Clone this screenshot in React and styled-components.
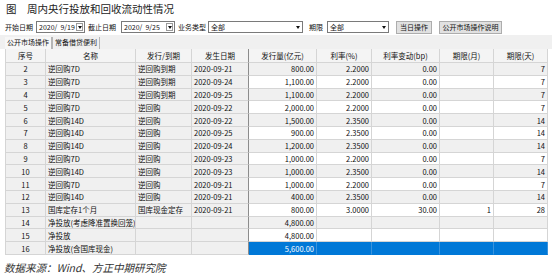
import React from "react";
import styled, { createGlobalStyle } from "styled-components";

const GlobalStyle = createGlobalStyle`
  body {
    margin: 0;
    background: #fff;
    font-family: "Noto Sans CJK SC", "Noto Sans", sans-serif;
  }
`;

const Page = styled.div`
  width: 552px;
  height: 276px;
  overflow: hidden;
  background: #fff;
`;

const Title = styled.h1`
  margin: 0;
  padding: 3px 0 0 6px;
  height: 17px;
  box-sizing: border-box;
  font-size: 10.5px;
  line-height: 12px;
  font-weight: normal;
  color: #222;
  white-space: pre;
`;

const Toolbar = styled.div`
  display: flex;
  align-items: center;
  height: 14px;
  margin-top: 3px;
  padding-left: 5px;
  font-size: 7px;
  color: #111;
`;

const Label = styled.span`
  margin-left: ${(p) => p.$ml || 0}px;
  white-space: nowrap;
`;

const Field = styled.div`
  position: relative;
  display: flex;
  align-items: center;
  box-sizing: border-box;
  width: ${(p) => p.$w}px;
  height: 12px;
  margin-left: ${(p) => p.$ml || 0}px;
  padding-left: 2px;
  border: 1px solid #7a7a7a;
  background: #fff;
  white-space: pre;
`;

const Arrow = styled.span`
  margin-left: auto;
  margin-right: 1px;
  display: flex;
  align-items: center;
  justify-content: center;
  width: 7px;
  height: 8px;
  box-sizing: border-box;
  border: ${(p) => (p.$boxed ? "1px solid #9a9a9a" : "none")};
  background: #fff;

  &::after {
    content: "";
    border-left: 2.5px solid transparent;
    border-right: 2.5px solid transparent;
    border-top: 3px solid #111;
  }
`;

const Button = styled.button`
  box-sizing: border-box;
  width: ${(p) => p.$w}px;
  height: 13px;
  margin-left: ${(p) => p.$ml || 0}px;
  padding: 0;
  border: 1px solid #adadad;
  background: #e1e1e1;
  font-family: inherit;
  font-size: 7px;
  line-height: 11px;
  color: #111;
`;

const TabBar = styled.div`
  display: flex;
  align-items: flex-end;
  height: 14px;
  margin-top: 1px;
  padding-left: 5px;
  background: #f0f0f0;
`;

const Tab = styled.div`
  box-sizing: border-box;
  height: 12px;
  padding: 0 2px;
  font-size: 7px;
  line-height: 11px;
  color: #111;
  background: ${(p) => (p.$active ? "#f7f7f7" : "#f0f0f0")};
  border-right: 1px solid #b5b5b5;
  border-left: ${(p) => (p.$active ? "none" : "1px solid #b5b5b5")};
`;

const Grid = styled.div`
  display: grid;
  grid-template-columns: 40px 90px 56px 57px 68px 55px 68px 54px 54px;
  grid-template-rows: 14px repeat(15, 12.8px);
  width: 542px;
  margin-left: 5px;
  border-left: 1px solid #d5d5d5;
  box-sizing: border-box;
`;

const HeadCell = styled.div`
  display: flex;
  align-items: center;
  justify-content: center;
  box-sizing: border-box;
  background: #f4f4f4;
  border-right: 1px solid ${(p) => (p.$sep ? "#8c8c8c" : "#d5d5d5")};
  border-bottom: 1px solid #d5d5d5;
  font-size: 7.5px;
  color: #111;
  white-space: nowrap;
`;

const justify = { left: "flex-start", center: "center", right: "flex-end" };

const Cell = styled.div`
  display: flex;
  align-items: center;
  justify-content: ${(p) => justify[p.$align || "left"]};
  box-sizing: border-box;
  padding: 0 2px;
  overflow: hidden;
  white-space: nowrap;
  font-size: 7.5px;
  color: ${(p) => (p.$selected ? "#fff" : "#111")};
  background: ${(p) =>
    p.$selected ? "#0078d7" : p.$grey ? "#f0f0f0" : "#fff"};
  border-right: 1px solid
    ${(p) => (p.$sep ? "#8c8c8c" : p.$selected ? "#3a93dd" : "#d5d5d5")};
  border-bottom: 1px solid ${(p) => (p.$selected ? "#0078d7" : "#d5d5d5")};
`;

const Source = styled.p`
  margin: 5px 0 0 4px;
  font-size: 10.5px;
  font-style: italic;
  color: #333;
`;

const columns = [
  { title: "序号", align: "center" },
  { title: "名称" },
  { title: "发行/到期" },
  { title: "发生日期", sep: true },
  { title: "发行量(亿元)", align: "right" },
  { title: "利率(%)", align: "right" },
  { title: "利率变动(bp)", align: "right" },
  { title: "期限(月)", align: "right" },
  { title: "期限(天)", align: "right" },
];

const rows = [
  ["2", "逆回购7D", "逆回购到期", "2020-09-21", "800.00", "2.2000", "0.00", "", "7"],
  ["3", "逆回购7D", "逆回购到期", "2020-09-24", "1,100.00", "2.2000", "0.00", "", "7"],
  ["4", "逆回购7D", "逆回购到期", "2020-09-25", "1,100.00", "2.2000", "0.00", "", "7"],
  ["5", "逆回购7D", "逆回购", "2020-09-22", "2,000.00", "2.2000", "0.00", "", "7"],
  ["6", "逆回购14D", "逆回购", "2020-09-22", "1,500.00", "2.3500", "0.00", "", "14"],
  ["7", "逆回购14D", "逆回购", "2020-09-25", "900.00", "2.3500", "0.00", "", "14"],
  ["8", "逆回购14D", "逆回购", "2020-09-24", "1,200.00", "2.3500", "0.00", "", "14"],
  ["9", "逆回购7D", "逆回购", "2020-09-23", "1,000.00", "2.2000", "0.00", "", "7"],
  ["10", "逆回购14D", "逆回购", "2020-09-23", "1,000.00", "2.3500", "0.00", "", "14"],
  ["11", "逆回购7D", "逆回购", "2020-09-21", "1,000.00", "2.2000", "0.00", "", "7"],
  ["12", "逆回购14D", "逆回购", "2020-09-21", "400.00", "2.3500", "0.00", "", "14"],
  ["13", "国库定存1个月", "国库现金定存", "2020-09-21", "800.00", "3.0000", "30.00", "1", "28"],
  ["14", "净投放(考虑降准置换回笼)", "", "", "4,800.00", "", "", "", ""],
  ["15", "净投放", "", "", "4,800.00", "", "", "", ""],
  ["16", "净投放(含国库现金)", "", "", "5,600.00", "", "", "", ""],
];

export default function App() {
  return (
    <Page>
      <GlobalStyle />
      <Title>图　周内央行投放和回收流动性情况</Title>

      <Toolbar>
        <Label>开始日期</Label>
        <Field $w={49} $ml={3}>
          2020/  9/19
          <Arrow $boxed />
        </Field>
        <Label $ml={3}>截止日期</Label>
        <Field $w={54} $ml={5}>
          2020/  9/25
          <Arrow $boxed />
        </Field>
        <Label $ml={3}>业务类型</Label>
        <Field $w={95} $ml={2}>
          全部
          <Arrow />
        </Field>
        <Label $ml={6}>期限</Label>
        <Field $w={62} $ml={4}>
          全部
          <Arrow />
        </Field>
        <Button $w={36} $ml={7}>当日操作</Button>
        <Button $w={63} $ml={7}>公开市场操作说明</Button>
      </Toolbar>

      <TabBar>
        <Tab $active>公开市场操作</Tab>
        <Tab>常备借贷便利</Tab>
      </TabBar>

      <Grid>
        {columns.map((c) => (
          <HeadCell key={c.title} $sep={c.sep}>
            {c.title}
          </HeadCell>
        ))}
        {rows.map((row, r) => {
          const selected = r === rows.length - 1;
          const stripe = r % 2 === 0;
          return row.map((value, i) => {
            const frozen = i < 4;
            return (
              <Cell
                key={`${r}-${i}`}
                $align={columns[i].align}
                $sep={columns[i].sep}
                $grey={frozen || stripe}
                $selected={selected && !frozen}
              >
                {value}
              </Cell>
            );
          });
        })}
      </Grid>

      <Source>数据来源：Wind、方正中期研究院</Source>
    </Page>
  );
}
